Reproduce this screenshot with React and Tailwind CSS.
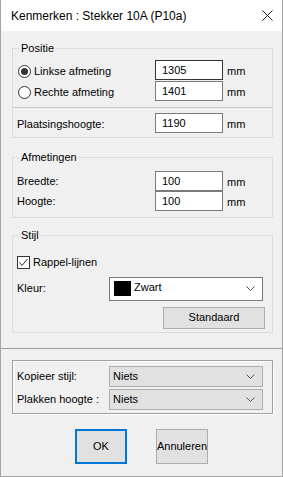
import React from 'react';

const font = { fontFamily: '"Liberation Sans", Arial, sans-serif' };

function Legend({ children }) {
    return (
        <div className="-mt-[7px] ml-[6px] px-[2px] w-fit bg-[#f0f0f0] leading-[13px]">{children}</div>
    );
}

function Field({ value, focused }) {
    return (
        <div className={`w-[68px] h-[20px] bg-white flex items-center pl-[6px] border ${focused ? 'border-[#333333]' : 'border-[#7a7a7a]'}`}>
            {value}
        </div>
    );
}

function Chevron() {
    return (
        <svg width="9" height="5" viewBox="0 0 9 5" className="mr-[7px]">
            <path d="M0.5 0.5 L4.5 4.5 L8.5 0.5" fill="none" stroke="#555" strokeWidth="1" />
        </svg>
    );
}

function Radio({ checked }) {
    return (
        <div className="w-[13px] h-[13px] rounded-full border border-[#333333] bg-white flex items-center justify-center">
            {checked && <div className="w-[7px] h-[7px] rounded-full bg-[#333333]" />}
        </div>
    );
}

export default function App() {
    return (
        <div style={font} className="w-[283px] h-[477px] bg-[#f0f0f0] border-x border-b border-[#a5a5a5] text-[11px] text-black flex flex-col">
            {/* title bar */}
            <div className="h-[31px] bg-white flex items-center justify-between pl-[10px] pr-[9px] text-[12px]">
                <span>Kenmerken : Stekker 10A (P10a)</span>
                <svg width="11" height="11" viewBox="0 0 11 11">
                    <path d="M0.5 0.5 L10.5 10.5 M10.5 0.5 L0.5 10.5" stroke="#222" strokeWidth="1" />
                </svg>
            </div>

            {/* Positie */}
            <div className="ml-[11px] mt-[17px] w-[261px] border border-[#dcdcdc] pb-[4px]">
                <Legend>Positie</Legend>
                <div className="mt-[5px] flex items-center">
                    <div className="w-[142px] flex items-center pl-[5px] gap-[3px] mt-[3px]">
                        <Radio checked />
                        <span>Linkse afmeting</span>
                    </div>
                    <Field value="1305" focused />
                    <span className="ml-[4px] mt-[3px]">mm</span>
                </div>
                <div className="mt-[1px] flex items-center">
                    <div className="w-[142px] flex items-center pl-[5px] gap-[3px] mt-[3px]">
                        <Radio />
                        <span>Rechte afmeting</span>
                    </div>
                    <Field value="1401" />
                    <span className="ml-[4px] mt-[3px]">mm</span>
                </div>
                <div className="mt-[6px] h-px bg-[#c8c8c8]" />
                <div className="mt-[5px] flex items-center">
                    <div className="w-[142px] pl-[4px] mt-[2px]">Plaatsingshoogte:</div>
                    <Field value="1190" />
                    <span className="ml-[4px] mt-[3px]">mm</span>
                </div>
            </div>

            {/* Afmetingen */}
            <div className="ml-[11px] mt-[19px] w-[261px] border border-[#dcdcdc] pb-[6px]">
                <Legend>Afmetingen</Legend>
                <div className="mt-[7px] flex items-center">
                    <div className="w-[142px] pl-[4px] mt-[1px]">Breedte:</div>
                    <Field value="100" />
                    <span className="ml-[4px] mt-[3px]">mm</span>
                </div>
                <div className="flex items-center">
                    <div className="w-[142px] pl-[4px] mt-[1px]">Hoogte:</div>
                    <Field value="100" />
                    <span className="ml-[4px] mt-[3px]">mm</span>
                </div>
            </div>

            {/* Stijl */}
            <div className="ml-[11px] mt-[17px] w-[261px] border border-[#dcdcdc] pb-[3px]">
                <Legend>Stijl</Legend>
                <div className="mt-[12px] ml-[4px] flex items-center gap-[3px]">
                    <div className="w-[13px] h-[13px] border border-[#333333] bg-white flex items-center justify-center">
                        <svg width="11" height="11" viewBox="0 0 11 11">
                            <path d="M1.5 5.5 L4 8.5 L9.5 2" fill="none" stroke="#333" strokeWidth="1" />
                        </svg>
                    </div>
                    <span>Rappel-lijnen</span>
                </div>
                <div className="mt-[6px] flex items-center">
                    <div className="w-[96px] pl-[4px]">Kleur:</div>
                    <div className="w-[154px] h-[24px] bg-white border border-[#7a7a7a] flex items-center justify-between">
                        <div className="flex items-center gap-[3px] pl-[4px]">
                            <div className="w-[17px] h-[15px] bg-black" />
                            <span className="-mt-[2px]">Zwart</span>
                        </div>
                        <Chevron />
                    </div>
                </div>
                <div className="mt-[6px] flex justify-end pr-[7px]">
                    <div className="w-[102px] h-[22px] bg-[#e1e1e1] border border-[#adadad] flex items-center justify-center">
                        Standaard
                    </div>
                </div>
            </div>

            <div className="mt-[15px] h-px bg-[#a0a0a0]" />

            {/* Kopieer / Plakken */}
            <div className="ml-[11px] mt-[11px] w-[261px] border border-[#a0a0a0] shadow-[inset_1px_1px_0_#ffffff,1px_1px_0_#ffffff] pt-[5px] pb-[3px] flex flex-col gap-[2px]">
                <div className="flex items-center">
                    <div className="w-[96px] pl-[4px]">Kopieer stijl:</div>
                    <div className="w-[154px] h-[21px] bg-[#e1e1e1] border border-[#adadad] flex items-center justify-between pl-[3px]">
                        <span>Niets</span>
                        <Chevron />
                    </div>
                </div>
                <div className="flex items-center">
                    <div className="w-[96px] pl-[4px]">Plakken hoogte :</div>
                    <div className="w-[154px] h-[21px] bg-[#e1e1e1] border border-[#adadad] flex items-center justify-between pl-[3px]">
                        <span>Niets</span>
                        <Chevron />
                    </div>
                </div>
            </div>

            {/* buttons */}
            <div className="mt-[15px] flex pl-[74px] gap-[29px]">
                <div className="w-[52px] h-[35px] bg-[#e1e1e1] border-2 border-[#0078d7] flex items-center justify-center">
                    OK
                </div>
                <div className="w-[52px] h-[35px] bg-[#e1e1e1] border border-[#adadad] flex items-center justify-center">
                    Annuleren
                </div>
            </div>
        </div>
    );
}
